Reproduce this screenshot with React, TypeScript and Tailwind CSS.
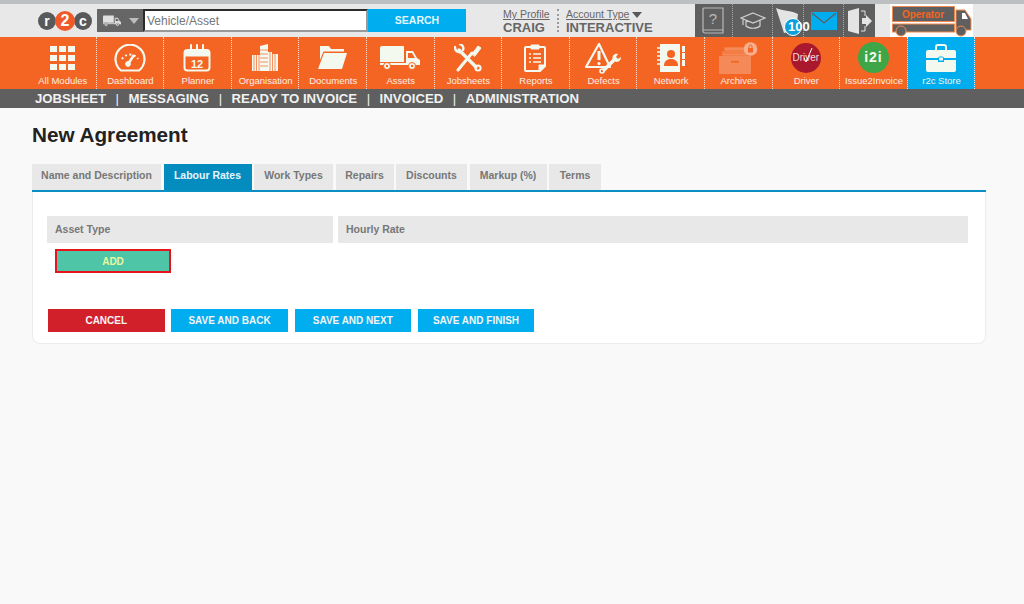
const F = "#f4f9f0";
const O = "#f46523";

const GridIcon = () => (
  <svg width="25" height="24" viewBox="0 0 25 24" fill={F}>
    {[0, 9, 18].flatMap((y) => [0, 9, 18].map((x) => <rect key={`${x}-${y}`} x={x} y={y} width="7" height="6" />))}
  </svg>
);
const GaugeIcon = () => (
  <svg width="32" height="28" viewBox="0 0 32 28" fill="none" stroke={F}>
    <path d="M7 26.5a14.5 14.5 0 1 1 18 0z" strokeWidth="2.2" />
    <path d="M8 19a9.5 9.5 0 0 1 16 0" strokeWidth="2" strokeDasharray="2 2.4" transform="translate(0 -4)" />
    <path d="M14 20 20 11" strokeWidth="2.5" />
    <circle cx="14" cy="20" r="2.4" fill={F} />
  </svg>
);
const CalendarIcon = () => (
  <svg width="28" height="28" viewBox="0 0 28 28" fill="none" stroke={F}>
    <rect x="1.5" y="6" width="25" height="20.5" rx="3" strokeWidth="2" />
    <path d="M1.5 7h25v5h-25z" fill={F} />
    <path d="M8 1v7M14 1v7M20 1v7" strokeWidth="2" strokeLinecap="round" />
    <text x="14" y="24" textAnchor="middle" fontSize="11" fontWeight="700" fill={F} stroke="none" fontFamily="Liberation Sans, sans-serif">12</text>
  </svg>
);
const BuildingIcon = () => (
  <svg width="26" height="27" viewBox="0 0 26 27" fill={F}>
    <path d="M0 11h8v16H0zM8 2l8-2v27H8zM16 8h4v2h6v17H16z" />
    <path d="M2 11v16M4.5 11v16M7 11v16M18 8v19M20.5 10v17M23 10v17" stroke={O} strokeWidth=".7" />
    <path d="M8 6h8M8 10h8M8 14h8M8 18h8M8 22h8" stroke={O} strokeWidth=".7" />
  </svg>
);
const FolderIcon = () => (
  <svg width="29" height="23" viewBox="0 0 29 23" fill={F}>
    <path d="M2 3V0h9l2 3h13v2.5H5.5L2 14z" />
    <path d="M6 7h23l-5 16H0z" />
  </svg>
);
const TruckIcon = ({ w = 40, h = 24, fill = F, hole = O }: { w?: number; h?: number; fill?: string; hole?: string }) => (
  <svg width={w} height={h} viewBox="0 0 40 24" fill={fill}>
    <path d="M0 2a2 2 0 0 1 2-2h22v16H0z" />
    <path d="M26 5h7l4 7 3 2v5H26zM28 7v5h7l-3-5z" fillRule="evenodd" />
    <path d="M0 17h40v2H0z" />
    <circle cx="7" cy="20" r="3.5" fill={fill} stroke={hole} />
    <circle cx="32" cy="20" r="3.5" fill={fill} stroke={hole} />
    <circle cx="7" cy="20" r="1.2" fill={hole} />
    <circle cx="32" cy="20" r="1.2" fill={hole} />
  </svg>
);
const ToolsIcon = () => (
  <svg width="28" height="28" viewBox="0 0 28 28" fill="none" stroke={F} strokeLinecap="round">
    <path d="M4 26 18 9" strokeWidth="3" />
    <path d="M18 10 24 2l3 2-6 8z" fill={F} strokeWidth="1" />
    <path d="M5 6 22 23" strokeWidth="3.4" />
    <path d="M1 3c0 4 3 6 6 5M6 0c3 1 4 4 3 6" strokeWidth="2.4" />
    <circle cx="24" cy="24" r="2.6" strokeWidth="2" />
  </svg>
);
const ClipboardIcon = () => (
  <svg width="22" height="28" viewBox="0 0 22 28" fill="none" stroke={F}>
    <path d="M2 3h18a1 1 0 0 1 1 1v18l-5 5H2a1 1 0 0 1-1-1V4a1 1 0 0 1 1-1z" strokeWidth="2" />
    <path d="M7 1h8v4H7z" fill={F} />
    <path d="M5 10h2M9 10h8M5 14h2M9 14h8M5 18h2M9 18h8" strokeWidth="1.6" />
    <path d="M15 27v-6h6z" fill={F} />
  </svg>
);
const DefectIcon = () => (
  <svg width="38" height="32" viewBox="0 0 38 32" fill="none" stroke={F}>
    <path d="M15 2 2 25h24L15 2z" strokeWidth="2.2" strokeLinejoin="round" />
    <path d="M15 9v9" strokeWidth="3" />
    <circle cx="15" cy="21.5" r="1.6" fill={F} stroke="none" />
    <path d="M19 29 31 17" strokeWidth="3.4" />
    <path d="M29 18c-2-4 2-7 5-6l-2 3 2 2 3-2c0 4-4 7-8 3z" fill={F} stroke="none" />
    <circle cx="18" cy="29" r="2" strokeWidth="1.6" />
  </svg>
);
const NetworkIcon = () => (
  <svg width="28" height="28" viewBox="0 0 28 28" fill={F}>
    <path d="M3 0h20v28H3z" />
    <path d="M0 4h5M0 8h5M0 12h5M0 16h5M0 20h5" stroke={F} strokeWidth="1.4" />
    <rect x="25" y="2" width="3" height="6" />
    <rect x="25" y="9" width="3" height="6" />
    <rect x="25" y="16" width="3" height="6" />
    <circle cx="14" cy="10" r="4" fill={O} />
    <path d="M7 22c0-5 3-7 7-7s7 2 7 7z" fill={O} />
  </svg>
);
const ArchiveIcon = () => (
  <svg width="40" height="32" viewBox="0 0 40 32" fill="#f58a58">
    <path d="M6 5h22v6H6zM4 9h26v5H4z" stroke={O} strokeWidth=".7" />
    <path d="M1 14h32v18H1z" />
    <path d="M13 19h8v1.6h-8z" fill={O} />
    <circle cx="32.5" cy="7" r="6.8" fill="#f7b08f" />
    <rect x="30" y="6" width="5" height="4.5" fill={O} />
    <path d="M31 6V4.5a1.5 1.5 0 0 1 3 0V6" stroke={O} fill="none" />
  </svg>
);
const DriverBadge = () => (
  <div className="relative flex h-[30px] w-[30px] items-center justify-center rounded-full bg-[#a9182c] text-[10px] text-[#f4d9dc]">
    Driver
    <svg className="absolute top-[4px] left-[12px]" width="10" height="16" viewBox="0 0 10 16" fill="none" stroke="#ffffff" strokeWidth="1">
      <path d="M1 11 3 15 9 1" />
    </svg>
  </div>
);
const I2iBadge = () => (
  <div className="flex h-[31px] w-[31px] items-center justify-center rounded-full bg-[#3fa648] text-[14px] font-bold tracking-[1px] text-[#f4f9f0]">i2i</div>
);
const BriefcaseIcon = () => (
  <svg width="30" height="28" viewBox="0 0 30 28" fill={F}>
    <path d="M10 6V3a2 2 0 0 1 2-2h6a2 2 0 0 1 2 2v3" fill="none" stroke={F} strokeWidth="2" />
    <path d="M2 6h26a2 2 0 0 1 2 2v6H0V8a2 2 0 0 1 2-2z" />
    <path d="M0 16h12v2h6v-2h12v10a2 2 0 0 1-2 2H2a2 2 0 0 1-2-2z" />
    <rect x="12.5" y="13" width="5" height="4" rx="1" stroke="#00aeef" />
  </svg>
);

const modules = [
  { label: "All Modules", icon: <GridIcon /> },
  { label: "Dashboard", icon: <GaugeIcon /> },
  { label: "Planner", icon: <CalendarIcon /> },
  { label: "Organisation", icon: <BuildingIcon /> },
  { label: "Documents", icon: <FolderIcon /> },
  { label: "Assets", icon: <TruckIcon /> },
  { label: "Jobsheets", icon: <ToolsIcon /> },
  { label: "Reports", icon: <ClipboardIcon /> },
  { label: "Defects", icon: <DefectIcon /> },
  { label: "Network", icon: <NetworkIcon /> },
  { label: "Archives", icon: <ArchiveIcon /> },
  { label: "Driver", icon: <DriverBadge /> },
  { label: "Issue2Invoice", icon: <I2iBadge /> },
  { label: "r2c Store", icon: <BriefcaseIcon />, active: true },
];

const subNav = ["JOBSHEET", "MESSAGING", "READY TO INVOICE", "INVOICED", "ADMINISTRATION"];

const tabs = [
  { label: "Name and Description", w: "w-[129px]" },
  { label: "Labour Rates", w: "w-[88px]", active: true },
  { label: "Work Types", w: "w-[79px]" },
  { label: "Repairs", w: "w-[58px]" },
  { label: "Discounts", w: "w-[71px]" },
  { label: "Markup (%)", w: "w-[77px]" },
  { label: "Terms", w: "w-[52px]" },
];

const Logo = () => (
  <div className="flex items-center">
    <span className="flex h-[18px] w-[18px] items-center justify-center rounded-full bg-[#58595b] text-[14px] font-bold leading-none text-white">r</span>
    <span className="z-10 -mx-[1px] flex h-[20px] w-[20px] items-center justify-center rounded-full bg-[#f05a28] text-[16px] font-bold leading-none text-white">2</span>
    <span className="flex h-[18px] w-[18px] items-center justify-center rounded-full bg-[#58595b] text-[14px] font-bold leading-none text-white">c</span>
  </div>
);

const OperatorTruck = () => (
  <svg width="83" height="33" viewBox="0 0 83 33">
    <rect x="2.5" y="2.5" width="62" height="15" fill="#5f5f5f" stroke="#f08a50" />
    <text x="33" y="13.5" textAnchor="middle" fontSize="10" fontWeight="700" fill={O} fontFamily="Liberation Sans, sans-serif">Operator</text>
    <rect x="2.5" y="20" width="62" height="8" fill="#5f5f5f" stroke="#f08a50" />
    <path d="M66 6h9l6 9v11H66z" fill="#5f5f5f" stroke="#f08a50" />
    <path d="M72 9h3l3 6h-6z" fill="#ffffff" />
    <circle cx="11" cy="27" r="5" fill="#5f5f5f" stroke="#f08a50" />
    <circle cx="71" cy="27" r="5" fill="#5f5f5f" stroke="#f08a50" />
  </svg>
);

const Header = () => (
  <header className="flex h-[33px] items-stretch bg-[#e8e8e8] pl-[38px]">
    <div className="flex w-[59px] items-center">
      <Logo />
    </div>
    <div className="mt-[5px] flex h-[23px] w-[46px] items-center gap-[8px] bg-[#666666] pl-[6px]">
      <TruckIcon w={18} h={12} fill="#e0e0e0" hole="#666666" />
      <span className="h-0 w-0 border-x-[5px] border-t-[6px] border-x-transparent border-t-[#bdbdbd]" />
    </div>
    <div className="mt-[5px] flex h-[23px] w-[225px] items-center border-2 border-[#2b2b2b] border-r-[#999999] border-b-[#999999] bg-white pl-[2px] text-[12px] text-[#777777]">Vehicle/Asset</div>
    <button className="mt-[5px] h-[23px] w-[98px] bg-[#00aeef] text-[10.5px] font-bold text-[#e4f6fd]">SEARCH</button>
    <div className="ml-[37px] flex w-[54px] flex-col pt-[5px]">
      <span className="text-[10.5px] leading-[11px] text-[#666666] underline">My Profile</span>
      <span className="text-[13px] leading-[16px] font-bold text-[#666666]">CRAIG</span>
    </div>
    <div className="my-[5px] border-l-2 border-dotted border-[#999999]" />
    <div className="ml-[7px] flex w-[128.5px] flex-col pt-[5px]">
      <span className="flex items-center gap-[3px] text-[10.5px] leading-[11px] text-[#666666]">
        <span className="underline">Account Type</span>
        <span className="h-0 w-0 border-x-[5px] border-t-[6px] border-x-transparent border-t-[#58595b]" />
      </span>
      <span className="text-[13px] leading-[16px] font-bold text-[#666666]">INTERACTIVE</span>
    </div>
    <div className="flex w-[180.5px] items-stretch bg-[#5f5f5f]">
      <div className="flex w-[38.5px] items-center justify-center border-r border-dotted border-[#aaaaaa]">
        <svg width="22" height="27" viewBox="0 0 22 27" fill="none" stroke="#b8b8b8">
          <path d="M1 24V2a1 1 0 0 1 1-1h19v25H3a2 2 0 0 1-2-2zM1 23h20" strokeWidth="1.2" />
          <text x="11" y="17" textAnchor="middle" fontSize="15" fill="#b8b8b8" stroke="none" fontFamily="Liberation Sans, sans-serif">?</text>
        </svg>
      </div>
      <div className="flex w-[40px] items-center justify-center border-r border-dotted border-[#aaaaaa]">
        <svg width="26" height="18" viewBox="0 0 26 18" fill="none" stroke="#d0d0d0">
          <path d="M13 1 25 6 13 11 1 6zM6 8v6c3 3 11 3 14 0V8M3 7v6" strokeWidth="1.2" />
        </svg>
      </div>
      <div className="relative flex w-[31px] items-center border-r border-dotted border-[#aaaaaa]">
        <svg className="ml-[3px]" width="24" height="27" viewBox="0 0 24 27" fill="#e4e4e4">
          <path d="M0 1c7 3 14 2 22 6l-2 16-12 3z" />
        </svg>
        <span className="absolute top-[14px] left-[11px] h-[18px] w-[18px] rounded-full border border-white bg-[#0c9fdc]" />
        <span className="absolute top-[14px] left-[15px] text-[13px] leading-[18px] font-bold text-white">100</span>
      </div>
      <div className="flex w-[40px] items-center justify-center border-r border-dotted border-[#aaaaaa]">
        <svg width="26" height="18" viewBox="0 0 26 18">
          <rect width="26" height="18" fill="#00aeef" />
          <path d="M1 1 13 11 25 1" fill="none" stroke="#5f5f5f" strokeWidth="1.3" />
        </svg>
      </div>
      <div className="flex flex-1 items-center pl-[4px]">
        <svg width="24" height="26" viewBox="0 0 24 26" fill="#e4e4e4">
          <path d="M0 3 11 0v26L0 23z" />
          <path d="M13 3h4v5M13 23h4v-5" fill="none" stroke="#e4e4e4" />
          <path d="M14 10h4V7l6 6-6 6v-3h-4z" />
        </svg>
      </div>
    </div>
    <div className="ml-[15px] flex w-[83px] bg-white">
      <OperatorTruck />
    </div>
  </header>
);

const ModuleBar = () => (
  <nav className="flex h-[52px] bg-[#f46523] pl-[29px]">
    {modules.map((m) => (
      <div
        key={m.label}
        className={`flex w-[67.6px] flex-col items-center border-r border-dotted border-[#fde0cf] ${m.active ? "bg-[#00aeef]" : ""}`}
      >
        <div className="flex h-[37px] items-center pt-[4px]">{m.icon}</div>
        <span className="mt-[1px] pl-[1px] text-[9.5px] leading-[12px] whitespace-nowrap text-[#fdeee5]">{m.label}</span>
      </div>
    ))}
  </nav>
);

const SubNav = () => (
  <div className="flex h-[19px] items-center bg-[#5f5f5f] pl-[35px] text-[13.2px] font-bold text-[#f1f1f1]">
    {subNav.map((s, i) => (
      <span key={s} className="flex items-center">
        {i > 0 && <span className="mx-[9.5px] font-normal">|</span>}
        {s}
      </span>
    ))}
  </div>
);

const Btn = ({ label, color }: { label: string; color: string }) => (
  <button className={`h-[23px] w-[116.5px] text-[10px] font-bold text-[#f4f4f4] ${color}`}>{label}</button>
);

export default function App() {
  return (
    <div className="h-[604px] w-[1024px] overflow-hidden bg-[#f9f9f9] font-['Liberation_Sans',Arial,sans-serif]">
      <div className="h-[4px] bg-[#bcbec0]" />
      <Header />
      <ModuleBar />
      <SubNav />
      <main className="px-[32px]">
        <h1 className="mt-[15px] text-[20.7px] leading-[24px] font-bold text-[#222222]">New Agreement</h1>
        <div className="mt-[17px] flex w-[954px] gap-[2.5px] border-b-2 border-[#0a8fc4]">
          {tabs.map((t) => (
            <div
              key={t.label}
              className={`flex h-[26px] items-center justify-center pb-[2px] text-[10.5px] font-bold ${t.w} ${t.active ? "bg-[#058cbf] text-[#e6f5fb]" : "bg-[#e8e8e8] text-[#777777]"}`}
            >
              {t.label}
            </div>
          ))}
        </div>
        <section className="h-[152px] w-[954px] rounded-b-[8px] border border-t-0 border-[#ececec] bg-white px-[14px] pt-[24px]">
          <div className="flex gap-[5px]">
            <div className="flex h-[27px] w-[286px] items-center bg-[#e8e8e8] pl-[8px] text-[10.5px] font-bold text-[#777777]">Asset Type</div>
            <div className="flex h-[27px] w-[630px] items-center bg-[#e8e8e8] pl-[8px] text-[10.5px] font-bold text-[#777777]">Hourly Rate</div>
          </div>
          <button className="mt-[6px] ml-[8px] block h-[24px] w-[116px] border-2 border-[#e8141c] bg-[#4dc5a6] text-[10px] font-bold text-[#e8f8a0]">ADD</button>
          <div className="mt-[36px] flex gap-[6.75px] pl-[1px]">
            <Btn label="CANCEL" color="bg-[#d2202a]" />
            <Btn label="SAVE AND BACK" color="bg-[#00aeef]" />
            <Btn label="SAVE AND NEXT" color="bg-[#00aeef]" />
            <Btn label="SAVE AND FINISH" color="bg-[#00aeef]" />
          </div>
        </section>
      </main>
    </div>
  );
}
